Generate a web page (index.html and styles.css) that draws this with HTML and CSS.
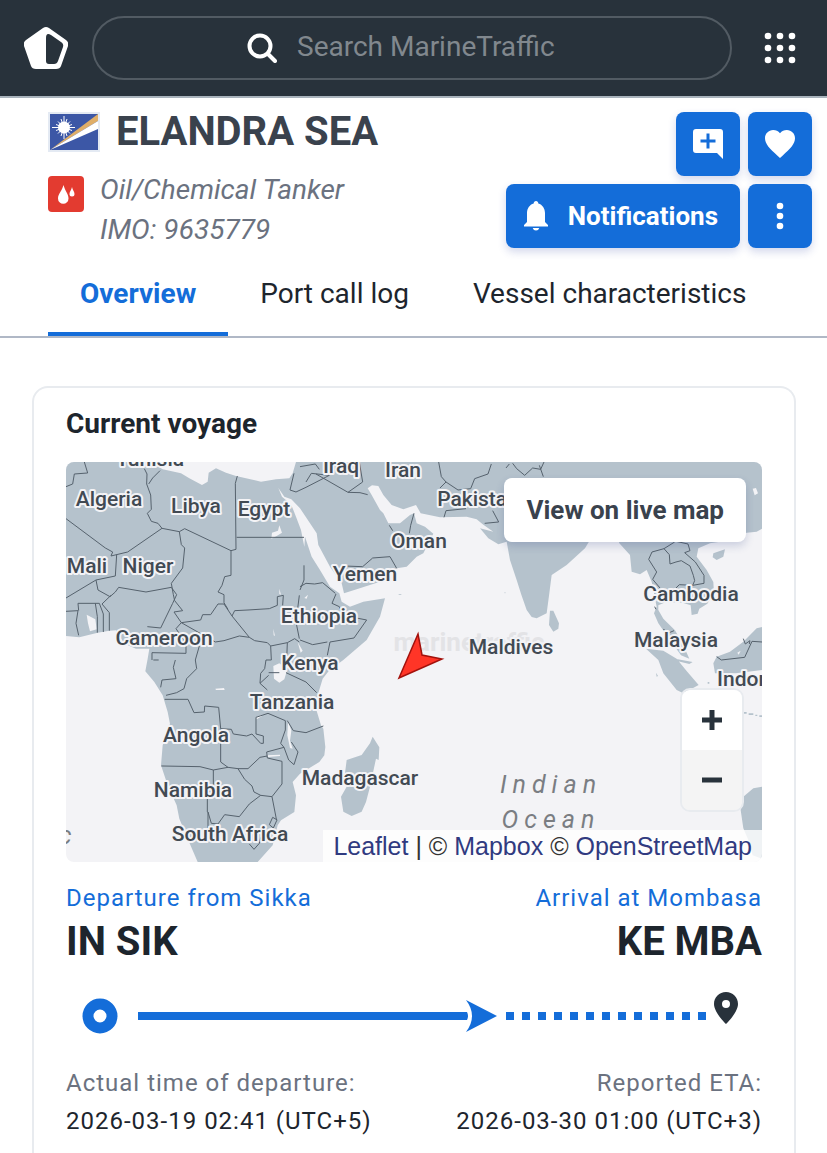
FILE: index.html
```html
<!DOCTYPE html>
<html lang="en">

<head>
    <meta charset="UTF-8">
    <meta name="viewport" content="width=device-width, initial-scale=1.0">
    <title>ELANDRA SEA - MarineTraffic</title>
    <link rel="stylesheet" href="styles.css">
</head>

<body>
    <header class="topbar">
        <a href="#" class="logo" aria-label="MarineTraffic home">
            <svg width="44" height="44" viewBox="0 0 44 44">
                <path d="M19 2Q22 0 25 2L42 14Q45 16 44 20L37 40Q36 43 32 43H12Q8 43 7 40L0 20Q-1 16 2 14Z" fill="#fff" />
                <path d="M22 12Q22 6 27 9L37 16Q40 18 39 21L34 35Q33 38 30 38H25Q22 38 22 35Z" fill="#28323b" />
            </svg>
        </a>
        <label class="search">
            <svg width="30" height="30" viewBox="0 0 30 30" fill="none" stroke="#fff" stroke-width="4" stroke-linecap="round">
                <circle cx="13" cy="13" r="10.500" />
                <path d="M21 21L28 28" />
            </svg>
            <input type="text" placeholder="Search MarineTraffic" aria-label="Search MarineTraffic">
        </label>
        <button type="button" class="apps" aria-label="Menu">
            <svg width="32" height="32" viewBox="0 0 32 32" fill="#fff">
                <circle cx="4" cy="4" r="3.300" /><circle cx="16" cy="4" r="3.300" /><circle cx="28" cy="4" r="3.300" />
                <circle cx="4" cy="16" r="3.300" /><circle cx="16" cy="16" r="3.300" /><circle cx="28" cy="16" r="3.300" />
                <circle cx="4" cy="28" r="3.300" /><circle cx="16" cy="28" r="3.300" /><circle cx="28" cy="28" r="3.300" />
            </svg>
        </button>
    </header>

    <section class="vessel">
        <div class="vessel-info">
            <div class="vessel-name">
                <svg class="flag" width="48" height="36" viewBox="0 0 48 36">
                    <rect width="48" height="36" fill="#3c57a6" />
                    <path d="M0 36L48 0V7Z" fill="#dfae68" />
                    <path d="M0 36L48 7V15Z" fill="#fff" />
                    <path d="M14 2V25M2 13.500H25M8 7.500L20 19.500M8 19.500L20 7.500M11 5L17 22M17 5L11 22M6 10.500L22 16.500M6 16.500L22 10.500" stroke="#fff" stroke-width="1" />
                    <circle cx="14" cy="13.500" r="6" fill="#fff" />
                </svg>
                <h1>ELANDRA SEA</h1>
            </div>
            <div class="vessel-type">
                <svg width="36" height="36" viewBox="0 0 36 36">
                    <rect width="36" height="36" rx="4" fill="#e33b30" />
                    <path d="M15.500 9C14 15 10 18 10 22.500A5.200 5.200 0 0 0 20.500 22.500C20.500 18 17 15 15.500 9Z" fill="#fff" />
                    <path d="M24 11C23.500 14 21.500 15.500 21.500 18A2.500 2.500 0 0 0 26.500 18C26.500 15.500 24.500 14 24 11Z" fill="#fff" />
                </svg>
                <p>Oil/Chemical Tanker<br>IMO: 9635779</p>
            </div>
        </div>
        <div class="actions">
            <button type="button" aria-label="Add note">
                <svg width="30" height="30" viewBox="0 0 30 30">
                    <path d="M3 0H27Q30 0 30 3V30L24 24H3Q0 24 0 21V3Q0 0 3 0Z" fill="#fff" />
                    <path d="M15 4.500V19.500M7.500 12H22.500" stroke="#146dd9" stroke-width="3" />
                </svg>
            </button>
            <button type="button" aria-label="Add to fleet">
                <svg width="30" height="28" viewBox="0 0 30 28">
                    <path d="M15 28L12.500 25.700C4.500 18.500 0 14 0 8.300C0 3.600 3.600 0 8.200 0C10.800 0 13.300 1.200 15 3.200C16.700 1.200 19.200 0 21.800 0C26.400 0 30 3.600 30 8.300C30 14 25.500 18.500 17.500 25.700Z" fill="#fff" />
                </svg>
            </button>
            <button type="button" class="notify">
                <svg width="24" height="30" viewBox="0 0 24 30">
                    <path d="M12 0C13.400 0 14.300 1 14.300 2.400C18.500 3.600 21 7.500 21 12V21L24 24V25.500H0V24L3 21V12C3 7.500 5.500 3.600 9.700 2.400C9.700 1 10.600 0 12 0ZM8.700 27H15.300Q14.500 29.500 12 29.500Q9.500 29.500 8.700 27Z" fill="#fff" />
                </svg>
                Notifications
            </button>
            <button type="button" aria-label="More options">
                <svg width="8" height="28" viewBox="0 0 8 28" fill="#fff">
                    <circle cx="4" cy="4" r="3.300" /><circle cx="4" cy="14" r="3.300" /><circle cx="4" cy="24" r="3.300" />
                </svg>
            </button>
        </div>
    </section>

    <nav class="tabs">
        <a href="#" class="active">Overview</a>
        <a href="#">Port call log</a>
        <a href="#">Vessel characteristics</a>
    </nav>

    <main class="voyage-card">
        <h2>Current voyage</h2>

        <div class="map">
            <svg class="map-canvas" viewBox="0 0 696 400" preserveAspectRatio="xMidYMid slice">
                <g transform="scale(.33333)">
                    <!-- Africa, Arabia and Asia -->
                    <path class="land" d="M0 0H262L270 10L290 22L345 34L370 49L408 69L425 59L428 32L450 19L480 32L510 42L540 49L585 59L630 52L670 49L680 34L690 0H2088V200L2072 209L2042 212L1962 239L1932 244L1897 259L1892 284L1922 324L1942 360L1944 394L1924 425L1900 440L1895 455L1877 459L1874 430L1850 422L1800 420L1777 430L1777 444L1792 470L1827 505L1850 545L1870 590L1845 580L1802 520L1777 484L1764 454L1772 434L1757 359L1742 324L1722 337L1697 329L1692 279L1660 244L1652 219H1592L1572 234L1557 259L1502 309L1457 339L1450 394L1442 454L1412 469L1397 465L1382 444L1366 398L1352 354L1332 294L1322 239L1297 247L1267 229L1242 199L1282 209L1252 188L1232 172L1202 164L1122 166L1064 154L1050 129L1012 142L977 129L952 99L937 72L918 70L905 79L917 99L942 144L952 154L967 184H1002L1032 159L1044 154L1052 184L1077 194L1102 215L1072 274L1052 284L1022 314L992 319L942 359L872 382L834 394L827 364L792 314L757 249L752 214L732 184L702 139L676 112L655 104L637 78L648 104L664 118L678 134L690 164L705 204L715 254L717 224L737 284L762 324L792 374L820 394L827 419L852 434L892 419L957 409L942 464L902 534L832 594L790 625L770 650L755 700L750 740L765 790L772 800L778 855L775 880L760 900L702 935L680 960L690 1000L685 1050L645 1075L635 1090L620 1150L575 1200H395L365 1130L340 1070L332 1030L305 970L285 910L290 850L312 785L305 750L290 700L265 660L238 628L245 590L250 560L210 560L175 545L150 505L130 506L95 512L40 526L0 522Z" />
                    <!-- Madagascar, Sri Lanka, Hainan, Sumatra, Borneo, Australia -->
                    <path class="land" d="M920 824L940 856L938 894L930 890L912 974L900 1020L887 1049L857 1062L832 1049L825 1004L842 974L837 934L842 894L887 879L912 844ZM1452 446H1462L1479 484L1477 500L1462 509L1449 489ZM1942 274L1977 262L1972 284L1952 294L1940 286ZM1740 560L1792 566L1832 590L1860 625L1898 669L1852 694L1832 684L1792 634L1777 594ZM1952 584L1992 569L2032 539L2072 499L2088 495V624L2010 634H1947L1942 604ZM2088 974L2062 979L2032 1004L2024 1044L2032 1099L2047 1134L2060 1180L2088 1190ZM1815 588L1880 600L1870 606L1830 596ZM2034 750H2042V755H2034ZM2048 754H2062V759H2048ZM2068 758H2074V762H2068ZM2080 760H2088V765H2080ZM1925 660H1930V665H1925ZM1770 632L1776 642L1772 644ZM800 396H806V399H800ZM1316 390H1318V394H1316ZM998 396H1006V398H998Z" />
                    <!-- lakes and rivers -->
                    <path class="water" d="M62 458L88 472L92 502L72 508L66 484ZM618 212L636 206L640 190L648 212L632 222L616 230ZM640 380L645 398L640 396ZM622 500L627 522L623 520ZM695 540L710 566L704 572ZM622 612L640 604L664 622L655 652L640 662L624 650ZM666 776L676 806L672 836L680 860L672 858L664 820ZM604 880L642 878V882L606 885ZM570 766L590 758L588 762L572 772ZM448 680L474 678L476 684H450ZM715 408L726 398L722 410ZM2060 80L2070 78L2076 94L2066 100ZM2014 572L2024 566L2018 578Z" />
                    <!-- country borders -->
                    <path class="border" d="M55 0L65 33L25 36L20 66L0 74M235 20L243 36L242 66L254 99L256 142L244 154L256 178L276 184L288 199L185 270L135 282L140 270L118 258L0 170M248 66L260 48L282 26M288 199L340 209L356 200L495 266L510 262L508 64L514 42M512 226H714M495 266V340L476 344L468 370L456 390L474 398V422L486 442M340 209L346 248L356 258L350 318L316 364L322 398L326 416L350 446L324 450L346 482L404 474L410 458L434 458L456 426H474L498 462L506 446L546 444L610 440L634 430V404L652 400L650 430M152 278L148 342L90 354L0 408M90 354L96 384L132 404L148 390L158 376L240 390L316 376L332 398L320 424L284 498L244 494M135 400L108 426L130 452V506M36 424H100L112 456V510M88 424L94 464V512M0 448L36 446L30 484L38 520M36 424L38 446M498 462L550 526L520 522L474 536L448 540L346 482M550 526L566 536L604 542L614 552L664 542L686 530L700 540M664 542L662 594M614 552L616 594L600 594L596 620L584 634L582 664L604 684M346 482L330 500L360 544V574L258 572V594M400 552L388 594L392 620L362 650L354 680L332 692L300 700M328 594L322 616L330 650L288 654L284 676M262 594H278M296 712H366L384 752L415 750L416 732L458 736L464 800V900L486 916L442 924L402 914L286 912M464 800L496 802L502 816L542 822L558 816L584 844H592V822L570 816V766L606 754L658 776V804L644 844L654 856L602 870L604 888L648 898V966L618 1004L584 1000L550 1026L520 1064L476 1058L456 1086L436 1084L426 1050V1098M442 924V988H424V1050M486 916L516 920L536 952L558 972L564 990L584 1000M516 920H546L582 886L604 882M618 1004L632 1076L622 1098L610 1088L620 1066L634 1074M550 1146L564 1162L580 1144L584 1126M660 632L720 660L752 692M608 632H640M582 664L608 640M664 776L682 806L720 812L772 792M676 840L696 870L684 908L668 894L654 856M684 34L672 84L690 90L720 76L790 40L736 34L720 60M702 14L748 6L760 22M750 36L846 91L882 92L905 98M846 91L890 60L880 0M1118 0L1126 44L1140 60L1122 78M1140 60L1176 84L1214 80L1226 50L1266 36L1276 6M1134 166L1140 146L1200 140M1280 146L1298 180L1256 184M1340 4L1352 20L1376 40L1400 18L1424 22L1434 0M970 190L980 206M1044 154L1034 190L1030 214M992 319L972 284L920 288L890 314L834 312M702 374L720 364L746 366L770 362L808 394M714 310V354L702 384M700 400L690 480L700 530M810 396L798 424L820 434L830 460L902 474L864 528L792 540L784 580M702 534L740 548L784 540M1826 240L1794 260L1758 270L1748 292L1772 330L1760 352L1782 378M1794 260L1810 278L1812 306L1830 300L1846 296L1872 312L1882 340L1886 356L1880 370L1914 364V340L1888 300L1856 272L1872 266L1866 246L1830 238M1880 370L1840 368L1828 380M1770 442L1766 434M1792 502L1810 512L1824 506M1952 584L1966 594L2036 586L2058 538L2088 540M2032 530L2038 546L2052 536L2050 546M1320 18L1330 6M1420 10L1432 44" />
                </g>

                <text class="watermark" x="403" y="189">marinetraffic</text>

                <g class="country">
                    <text x="84" y="4">Tunisia</text>
                    <text x="43" y="44">Algeria</text>
                    <text x="130" y="51">Libya</text>
                    <text x="198" y="54">Egypt</text>
                    <text x="21" y="111">Mali</text>
                    <text x="82" y="111">Niger</text>
                    <text x="98" y="183">Cameroon</text>
                    <text x="275" y="11">Iraq</text>
                    <text x="337" y="15">Iran</text>
                    <text x="412" y="44">Pakistan</text>
                    <text x="353" y="86">Oman</text>
                    <text x="299" y="119">Yemen</text>
                    <text x="253" y="161">Ethiopia</text>
                    <text x="244" y="208">Kenya</text>
                    <text x="226" y="247">Tanzania</text>
                    <text x="130" y="280">Angola</text>
                    <text x="127" y="335">Namibia</text>
                    <text x="164" y="379">South Africa</text>
                    <text x="294" y="323">Madagascar</text>
                    <text x="445" y="192">Maldives</text>
                    <text x="625" y="139">Cambodia</text>
                    <text x="610" y="185">Malaysia</text>
                    <text x="697" y="224">Indonesia</text>
                </g>
                <g class="ocean">
                    <text x="485" y="331">Indian</text>
                    <text x="485" y="366">Ocean</text>
                    <text x="2" y="382">c</text>
                </g>

                <path d="M352 172L356 193L376 197L333 216Z" fill="#ff3527" stroke="#a3110c" stroke-width="1.500" />
            </svg>
            <a href="#" class="live-map">View on live map</a>
            <div class="zoom">
                <button type="button" aria-label="Zoom in">
                    <svg width="20" height="20" viewBox="0 0 20 20" stroke="#28323b" stroke-width="5"><path d="M10 0V20M0 10H20" /></svg>
                </button>
                <button type="button" class="zoom-out" aria-label="Zoom out">
                    <svg width="20" height="20" viewBox="0 0 20 20" stroke="#28323b" stroke-width="5"><path d="M0 10H20" /></svg>
                </button>
            </div>
            <div class="attribution">
                <a href="#">Leaflet</a> | © <a href="#">Mapbox</a> © <a href="#">OpenStreetMap</a>
            </div>
        </div>

        <div class="row ports">
            <div>
                <a href="#">Departure from Sikka</a>
                <strong>IN SIK</strong>
            </div>
            <div>
                <a href="#">Arrival at Mombasa</a>
                <strong>KE MBA</strong>
            </div>
        </div>

        <div class="track">
            <svg class="origin" width="36" height="36" viewBox="0 0 36 36">
                <circle cx="18" cy="18" r="12" fill="none" stroke="#146dd9" stroke-width="11" />
            </svg>
            <div class="sailed" style="width: 50%"></div>
            <svg class="ship" width="32" height="32" viewBox="0 0 32 32">
                <path d="M0 0L31 16L0 32Q12 16 0 0Z" fill="#146dd9" />
                <path d="M0 12H1Q3 16 1 20H0Z" fill="#146dd9" />
            </svg>
            <div class="remaining"></div>
            <svg class="pin" width="24" height="32" viewBox="0 0 24 32">
                <path d="M12 0C5.300 0 0 5.300 0 12C0 20.500 12 32 12 32C12 32 24 20.500 24 12C24 5.300 18.700 0 12 0ZM12 8A4 4 0 1 1 12 16A4 4 0 1 1 12 8Z" fill="#28323b" fill-rule="evenodd" />
            </svg>
        </div>

        <div class="row times">
            <div>
                <span>Actual time of departure:</span>
                <time>2026-03-19 02:41 (UTC+5)</time>
            </div>
            <div>
                <span>Reported ETA:</span>
                <time>2026-03-30 01:00 (UTC+3)</time>
            </div>
        </div>
    </main>
</body>

</html>
```
FILE: styles.css
```css
/* General Styles */
* {
    box-sizing: border-box;
}

body {
    font-family: Roboto, sans-serif;
    background-color: #fff;
    color: #1d252d;
    margin: 0;
    min-height: 100vh;
    display: flex;
    flex-direction: column;
}

h1,
h2,
p {
    margin: 0;
}

a {
    color: #146dd9;
    text-decoration: none;
}

button {
    border: none;
    padding: 0;
    font-family: inherit;
    cursor: pointer;
}

svg {
    display: block;
    flex-shrink: 0;
}

/* Top bar */
.topbar {
    display: flex;
    align-items: center;
    background-color: #28323b;
    border-bottom: 2px solid #a9b3bc;
    padding: 16px 31px 16px 24px;
}

.search {
    flex: 1;
    display: flex;
    justify-content: center;
    align-items: center;
    gap: 20px;
    height: 64px;
    margin: 0 32px 0 24px;
    border: 2px solid #525b63;
    border-radius: 32px;
}

.search input {
    width: 280px;
    padding: 0 0 4px;
    border: none;
    outline: none;
    background: none;
    color: #fff;
    font-family: inherit;
    font-size: 28px;
}

.search input::placeholder {
    color: #81888e;
}

.apps {
    background: none;
}

/* Vessel header */
.vessel {
    display: flex;
    justify-content: space-between;
    padding: 14px 15px 0 48px;
}

.vessel-name {
    display: flex;
    align-items: center;
    gap: 16px;
}

.flag {
    box-sizing: content-box;
    border: 2px solid #e4eaf3;
}

h1 {
    font-size: 40px;
    line-height: 40px;
    color: #3a424d;
}

.vessel-type {
    display: flex;
    gap: 16px;
    margin-top: 24px;
}

.vessel-type p {
    margin-top: -6px;
    font-size: 28px;
    line-height: 40px;
    font-style: italic;
    color: #6b7280;
}

.actions {
    display: flex;
    flex-wrap: wrap;
    justify-content: flex-end;
    align-content: flex-start;
    gap: 8px;
    width: 320px;
}

.actions button {
    display: flex;
    align-items: center;
    justify-content: center;
    min-width: 64px;
    height: 64px;
    border-radius: 8px;
    background-color: #146dd9;
    color: #fff;
    box-shadow: 0 4px 8px rgba(40, 60, 160, 0.2);
}

.actions .notify {
    gap: 20px;
    padding: 0 22px 0 18px;
    font-size: 26px;
    font-weight: bold;
}

/* Tabs */
.tabs {
    display: flex;
    margin-top: 6px;
    padding-left: 48px;
    border-bottom: 2px solid #b0b8c6;
}

.tabs a {
    padding: 20px 32px;
    border-bottom: 4px solid transparent;
    font-size: 28px;
    line-height: 36px;
    color: #1d252d;
    white-space: nowrap;
}

.tabs .active {
    border-color: #146dd9;
    color: #146dd9;
    font-weight: bold;
}

/* Voyage card */
.voyage-card {
    flex: 1;
    margin: 48px 31px 0 32px;
    padding: 18px 32px 8px;
    border: 2px solid #e8ebef;
    border-bottom: none;
    border-radius: 16px 16px 0 0;
}

h2 {
    margin-bottom: 20px;
    font-size: 28px;
    line-height: 36px;
}

/* Map */
.map {
    position: relative;
    height: 400px;
    border-radius: 8px;
    overflow: hidden;
    background-color: #f3f3f6;
}

.map-canvas {
    width: 100%;
    height: 100%;
}

.land {
    fill: #b5c2cc;
}

.water {
    fill: #f3f3f6;
}

.border {
    fill: none;
    stroke: #55616c;
    stroke-width: 3;
}

.country {
    font-size: 21px;
    font-weight: 500;
    fill: #424a53;
    stroke: #f3f3f6;
    stroke-width: 4px;
    stroke-linejoin: round;
    paint-order: stroke;
    text-anchor: middle;
}

.ocean {
    font-size: 25px;
    font-style: italic;
    fill: #7a7d82;
    text-anchor: middle;
    letter-spacing: 6px;
}

.watermark {
    font-size: 26px;
    font-weight: bold;
    fill: #e3e3e6;
    text-anchor: middle;
}

.live-map {
    position: absolute;
    top: 16px;
    right: 16px;
    padding: 0 22px;
    border-radius: 8px;
    background-color: #fff;
    box-shadow: 0 4px 8px rgba(40, 60, 130, 0.2);
    color: #3a424d;
    font-size: 26px;
    font-weight: bold;
    line-height: 64px;
}

.zoom {
    position: absolute;
    right: 18px;
    bottom: 50px;
    border: 2px solid #e8ebef;
    border-radius: 10px;
    overflow: hidden;
}

.zoom button {
    display: flex;
    align-items: center;
    justify-content: center;
    width: 60px;
    height: 60px;
    background-color: #fff;
}

.zoom .zoom-out {
    background-color: #f4f4f4;
}

.attribution {
    position: absolute;
    right: 0;
    bottom: 0;
    padding: 0 10px;
    background-color: rgba(255, 255, 255, 0.8);
    color: #333;
    font-family: "Liberation Sans", Arial, sans-serif;
    font-size: 25px;
    line-height: 32px;
}

.attribution a {
    color: #303a80;
}

/* Ports and times */
.row {
    display: flex;
    justify-content: space-between;
    font-size: 24px;
    letter-spacing: 1px;
}

.row div {
    display: flex;
    flex-direction: column;
}

.row div:last-child {
    align-items: flex-end;
}

.ports {
    margin-top: 20px;
    line-height: 32px;
}

.ports strong {
    font-size: 40px;
    line-height: 56px;
    letter-spacing: normal;
}

.track {
    display: flex;
    align-items: center;
    padding: 0 24px 0 16px;
    margin: 22px 0 24px;
}

.sailed {
    height: 8px;
    margin-left: 20px;
    background-color: #146dd9;
}

.remaining {
    flex: 1;
    height: 8px;
    margin: 0 8px;
    background: repeating-linear-gradient(90deg, #146dd9 0 8px, transparent 8px 16px);
}

.pin {
    margin-bottom: 16px;
}

.times {
    line-height: 38px;
}

.times span {
    color: #6b7280;
}
```
